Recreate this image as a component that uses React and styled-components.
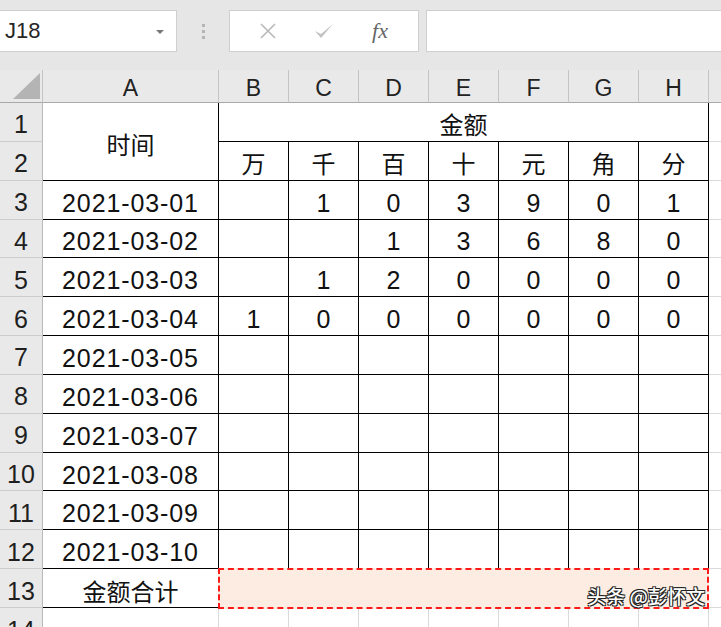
import styled, { createGlobalStyle } from "styled-components";

const GlobalStyle = createGlobalStyle`
    html, body {
        margin: 0;
        padding: 0;
        background: #e6e6e6;
        overflow: hidden;
    }
    body {
        width: 721px;
        height: 627px;
        font-family: "Liberation Sans", Arial, sans-serif;
    }
`;

const cols = ["A", "B", "C", "D", "E", "F", "G", "H"];
const units = ["万", "千", "百", "十", "元", "角", "分"];
const data = [
    ["2021-03-01", "", "1", "0", "3", "9", "0", "1"],
    ["2021-03-02", "", "", "1", "3", "6", "8", "0"],
    ["2021-03-03", "", "1", "2", "0", "0", "0", "0"],
    ["2021-03-04", "1", "0", "0", "0", "0", "0", "0"],
    ["2021-03-05"],
    ["2021-03-06"],
    ["2021-03-07"],
    ["2021-03-08"],
    ["2021-03-09"],
    ["2021-03-10"],
];

const App = () => {
    return (
        <Page>
            <GlobalStyle />
            <FormulaBar>
                <NameBox>
                    <span>J18</span>
                    <Caret />
                </NameBox>
                <Grip>
                    <i /><i /><i />
                </Grip>
                <FnBox>
                    <FnIcon>
                        <svg width="18" height="18" viewBox="0 0 18 18">
                            <path d="M2 2 L16 16 M16 2 L2 16" stroke="#b9b9b9" strokeWidth="1.6" fill="none" />
                        </svg>
                    </FnIcon>
                    <FnIcon>
                        <svg width="22" height="18" viewBox="0 0 22 18">
                            <path d="M2 9 L8 16 L20 2 L8 12 Z" fill="#c2c2c2" />
                        </svg>
                    </FnIcon>
                    <FxLabel>fx</FxLabel>
                </FnBox>
                <FormulaInput />
            </FormulaBar>

            <Sheet>
                <Corner>
                    <svg width="27" height="26" viewBox="0 0 27 26">
                        <polygon points="27,0 27,26 0,26" fill="#b4b4b4" />
                    </svg>
                </Corner>
                {cols.map((c) => (
                    <ColHead key={c}>{c}</ColHead>
                ))}
                <ColHead $last />

                {/* row 1 */}
                <RowHead>1</RowHead>
                <Cell $cjk style={{ gridRow: "span 2" }}>时间</Cell>
                <Cell $cjk style={{ gridColumn: "span 7" }}>金额</Cell>
                <Cell $outside />

                {/* row 2 */}
                <RowHead>2</RowHead>
                {units.map((u) => (
                    <Cell key={u} $cjk>{u}</Cell>
                ))}
                <Cell $outside />

                {data.map((row, i) => (
                    <Row key={i} n={i + 3} row={row} />
                ))}

                {/* row 13 */}
                <RowHead>13</RowHead>
                <Cell $cjk>金额合计</Cell>
                <TotalCell>
                    <Watermark>头条 @彭怀文</Watermark>
                </TotalCell>
                <Cell $outside />

                {/* row 14 */}
                <RowHead>14</RowHead>
                {cols.map((c) => (
                    <Cell key={c} $outside />
                ))}
                <Cell $outside />
            </Sheet>
        </Page>
    );
};

const Row = ({ n, row }) => (
    <>
        <RowHead>{n}</RowHead>
        {cols.map((c, j) => (
            <Cell key={c} $date={j === 0}>{row[j] || ""}</Cell>
        ))}
        <Cell $outside />
    </>
);

export default App;

const Page = styled.div`
    width: 721px;
    height: 627px;
    overflow: hidden;
    background: #e6e6e6;
`;

const FormulaBar = styled.div`
    display: flex;
    align-items: center;
    height: 42px;
    padding-top: 10px;
    margin-bottom: 18px;
`;

const Box = styled.div`
    box-sizing: border-box;
    height: 42px;
    background: #ffffff;
    border: 1px solid #cfcfcf;
`;

const NameBox = styled(Box)`
    width: 177px;
    display: flex;
    align-items: center;
    justify-content: space-between;
    padding: 0 12px 0 5px;
    font-size: 22px;
    color: #262626;
    border-left: none;
`;

const Caret = styled.span`
    width: 0;
    height: 0;
    border-left: 4px solid transparent;
    border-right: 4px solid transparent;
    border-top: 4px solid #777;
    margin-top: 2px;
`;

const Grip = styled.div`
    width: 52px;
    display: flex;
    flex-direction: column;
    align-items: center;
    gap: 3px;
    i {
        display: block;
        width: 3px;
        height: 3px;
        background: #b5b5b5;
    }
`;

const FnBox = styled(Box)`
    width: 190px;
    display: flex;
    align-items: center;
    justify-content: space-around;
    padding: 0 10px;
`;

const FnIcon = styled.span`
    display: flex;
    align-items: center;
    justify-content: center;
    width: 30px;
`;

const FxLabel = styled.span`
    font-family: "Liberation Serif", "Times New Roman", serif;
    font-style: italic;
    font-size: 22px;
    color: #666;
    width: 30px;
    text-align: center;
`;

const FormulaInput = styled(Box)`
    flex: 1;
    margin-left: 7px;
    border-right: none;
`;

const Sheet = styled.div`
    display: grid;
    grid-template-columns: 43px 176px repeat(7, 70px) 100px;
    grid-template-rows: 33px repeat(13, 38.85px) 40px;
    background: #ffffff;
    width: 721px;
`;

const Corner = styled.div`
    box-sizing: border-box;
    background: #e9e9e9;
    border-right: 1px solid #c4c4c4;
    border-bottom: 1px solid #a9a9a9;
    display: flex;
    align-items: flex-end;
    justify-content: flex-end;
    padding: 0 2px 3px 0;
`;

const ColHead = styled.div`
    box-sizing: border-box;
    background: #e9e9e9;
    border-right: 1px solid ${(p) => (p.$last ? "transparent" : "#c4c4c4")};
    border-bottom: 1px solid #a9a9a9;
    display: flex;
    align-items: center;
    justify-content: center;
    padding-top: 5px;
    font-size: 23px;
    color: #222;
`;

const RowHead = styled.div`
    box-sizing: border-box;
    background: #e9e9e9;
    border-right: 1px solid #b9b9b9;
    border-bottom: 1px solid #cdcdcd;
    display: flex;
    align-items: center;
    justify-content: center;
    padding-top: 6px;
    font-size: 25px;
    color: #1f1f1f;
`;

const Cell = styled.div`
    box-sizing: border-box;
    border-right: 1px solid ${(p) => (p.$outside ? "#dadada" : "#000000")};
    border-bottom: 1px solid ${(p) => (p.$outside ? "#dadada" : "#000000")};
    display: flex;
    align-items: center;
    justify-content: center;
    padding-top: ${(p) => (p.$cjk ? "4px" : "7px")};
    font-family: ${(p) =>
        p.$cjk
            ? '"Noto Sans CJK SC", "Liberation Sans", sans-serif'
            : '"Liberation Sans", Arial, sans-serif'};
    font-size: ${(p) => (p.$cjk ? "24px" : "25px")};
    letter-spacing: ${(p) => (p.$date ? "0.9px" : "0")};
    color: #111;
    white-space: nowrap;
`;

const TotalCell = styled.div`
    grid-column: span 7;
    position: relative;
    box-sizing: border-box;
    margin: -1px 0 -1px -1px;
    background: #fcece1;
    border: 2px dashed #ff1a1a;
`;

const Watermark = styled.span`
    position: absolute;
    right: 2px;
    bottom: -2px;
    font-family: "Noto Sans CJK SC", sans-serif;
    font-size: 19px;
    font-weight: 500;
    color: #ffffff;
    text-shadow: -1px -1px 0 #222, 1px -1px 0 #222, -1px 1px 0 #222, 1px 1px 0 #222;
    white-space: nowrap;
`;
